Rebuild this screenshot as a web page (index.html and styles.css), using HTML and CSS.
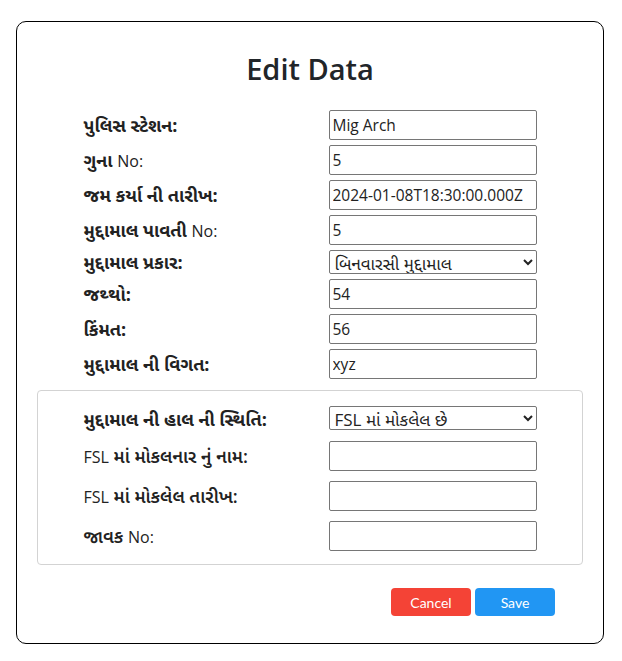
FILE: index.html
```html
<!DOCTYPE html>
<html lang="gu">
<head>
<meta charset="utf-8">
<title>Edit Data</title>
<link rel="stylesheet" href="styles.css">
</head>
<body>
<div class="card">
  <h1 class="title">Edit Data</h1>
  <div class="grid main">
    <label class="lbl">પુલિસ સ્ટેશન:</label>
    <input class="field" type="text" value="Mig Arch">
    <label class="lbl">ગુના <span class="lat">No:</span></label>
    <input class="field" type="text" value="5">
    <label class="lbl">જમ કર્યા ની તારીખ:</label>
    <input class="field" type="text" value="2024-01-08T18:30:00.000Z">
    <label class="lbl">મુદ્દામાલ પાવતી <span class="lat">No:</span></label>
    <input class="field" type="text" value="5">
    <label class="lbl">મુદ્દામાલ પ્રકાર:</label>
    <select class="sel"><option>બિનવારસી મુદ્દામાલ</option></select>
    <label class="lbl">જથ્થો:</label>
    <input class="field" type="text" value="54">
    <label class="lbl">કિંમત:</label>
    <input class="field" type="text" value="56">
    <label class="lbl">મુદ્દામાલ ની વિગત:</label>
    <input class="field" type="text" value="xyz">
  </div>
  <div class="box">
    <div class="grid sub">
      <label class="lbl">મુદ્દામાલ ની હાલ ની સ્થિતિ:</label>
      <select class="sel"><option>FSL માં મોકલેલ છે</option></select>
      <label class="lbl light"><span class="lat">FSL</span> માં મોકલનાર નું નામ:</label>
      <input class="field" type="text" value="">
      <label class="lbl light"><span class="lat">FSL</span> માં મોકલેલ તારીખ:</label>
      <input class="field" type="text" value="">
      <label class="lbl light">જાવક <span class="lat">No:</span></label>
      <input class="field" type="text" value="">
    </div>
  </div>
  <div class="actions">
    <button class="btn cancel" type="button">Cancel</button>
    <button class="btn save" type="button">Save</button>
  </div>
</div>
</body>
</html>
```

FILE: styles.css
```css
html, body {
  margin: 0;
  padding: 0;
  background: #fff;
}
body {
  font-family: "Open Sans", "Noto Sans", "Noto Sans Gujarati", sans-serif;
  color: #212529;
}
.card {
  box-sizing: border-box;
  width: 588px;
  margin: 21px 0 0 16px;
  border: 1px solid #000;
  border-radius: 10px;
  padding: 24px 20px 27px;
}
.title {
  margin: 0 0 18px;
  text-align: center;
  font-size: 29px;
  font-weight: 600;
  line-height: 46px;
  color: #212529;
}
.grid {
  display: grid;
  grid-template-columns: 245px 208px;
  justify-content: center;
  align-items: center;
}
.main {
  row-gap: 5px;
}
.sub {
  row-gap: 10px;
}
.sub .sel {
  margin-bottom: 1px;
}
.lbl {
  font-size: 18px;
  line-height: 22px;
  font-weight: 700;
  color: #222;
}
.lbl.light {
  font-weight: 600;
}
.lat {
  font-size: 16px;
  font-weight: 400;
}
.field {
  box-sizing: border-box;
  width: 208px;
  height: 30px;
  margin: 0;
  padding: 0 3px;
  border: 1px solid #767676;
  border-radius: 2px;
  font-family: inherit;
  font-size: 15.5px;
  color: #222;
  background: #fff;
}
.sel {
  box-sizing: border-box;
  width: 208px;
  height: 24px;
  margin: 0;
  padding: 0 0 0 1px;
  border: 1px solid #767676;
  border-radius: 2px;
  font-family: inherit;
  font-size: 17px;
  font-weight: 400;
  color: #222;
  background: #fff;
}
.box {
  margin-top: 11px;
  border: 1px solid #d3d3d3;
  border-radius: 4px;
  padding: 15px 0 13px;
}
.actions {
  display: flex;
  justify-content: flex-end;
  gap: 4px;
  margin-top: 23px;
  padding-right: 28px;
}
.btn {
  width: 80px;
  height: 28px;
  border: none;
  border-radius: 4px;
  color: #fff;
  font-family: Lato, "Open Sans", sans-serif;
  font-size: 14px;
  cursor: pointer;
}
.cancel {
  background: #f44336;
}
.save {
  background: #2196f3;
}
```
